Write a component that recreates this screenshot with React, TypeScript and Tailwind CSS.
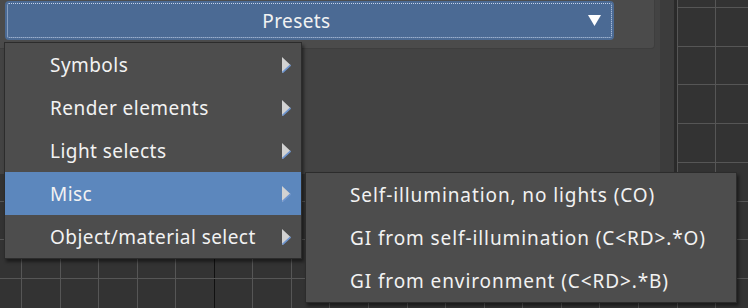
import React from 'react'

const menuItems = ['Symbols', 'Render elements', 'Light selects', 'Misc', 'Object/material select']
const subItems = [
  'Self-illumination, no lights (CO)',
  'GI from self-illumination (C<RD>.*O)',
  'GI from environment (C<RD>.*B)',
]

function ViewportGrid() {
  const xs = Array.from({ length: 20 }, (_, i) => 21 + i * 38.56)
  const ys = Array.from({ length: 9 }, (_, i) => 7 + i * 38.7)
  return (
    <svg className="absolute inset-0" width={748} height={308}>
      {xs.map((x, i) => (
        <line key={'v' + i} x1={Math.round(x) + 0.5} y1={0} x2={Math.round(x) + 0.5} y2={308} stroke={i === 5 ? '#111111' : '#565656'} strokeWidth={1} />
      ))}
      {ys.map((y, i) => (
        <line key={'h' + i} x1={0} y1={Math.round(y) + 0.5} x2={748} y2={Math.round(y) + 0.5} stroke="#565656" strokeWidth={1} />
      ))}
    </svg>
  )
}

function SubArrow() {
  return (
    <svg width={9} height={16} viewBox="0 0 9 16" className="shrink-0">
      <polygon points="0,0 8.5,8 0,16" fill="#d2d2d2" />
      <line x1={0.5} y1={15.5} x2={8.5} y2={8} stroke="#6e95cf" strokeWidth={1.6} />
    </svg>
  )
}

export default function App() {
  return (
    <div
      className="relative w-[748px] h-[308px] overflow-hidden bg-[#333333] text-[#f2f2f2]"
      style={{ fontFamily: '"Noto Sans", "Open Sans", sans-serif' }}
    >
      <ViewportGrid />

      {/* Rollout dialog */}
      <div className="relative flex w-[677px] h-[174px] bg-[#434343]">
        <div className="w-[660px]">
          <div className="w-[655px] h-[49px] bg-[#4b4b4b] rounded-br-[4px] border-b border-r border-[#3e3e3e] pl-[5px] pt-[1px]">
            <div className="relative flex items-center h-[39px] w-[609px] rounded-[4px] bg-[#4b6a94]">
              <div className="absolute inset-[2px] rounded-[2px] border border-dotted border-[#c3d2ea]" />
              <span className="flex-1 text-center text-[19px] tracking-[0.4px] leading-none pt-[2px]">Presets</span>
              <svg width={13} height={11} viewBox="0 0 13 11" className="mr-[13px]">
                <polygon points="0,0 13,0 6.5,11" fill="#ffffff" />
              </svg>
            </div>
          </div>
        </div>
        <div className="w-[14px] bg-[#3c3c3c]" />
        <div className="w-[3px] bg-[#2a2a2a]" />
      </div>

      {/* Presets menu */}
      <div className="absolute left-[4px] top-[42px] w-[298px] border border-[#2c2c2c] bg-[#4d4d4d] shadow-[2px_3px_3px_rgba(0,0,0,0.45)]">
        {menuItems.map((item) => (
          <div
            key={item}
            className={`flex items-center h-[43px] pl-[45px] pr-[10px] text-[19px] tracking-[0.45px] ${item === 'Misc' ? 'bg-[#5c87bd]' : ''}`}
          >
            <span className="flex-1 pt-[2px]">{item}</span>
            <SubArrow />
          </div>
        ))}
      </div>

      {/* Misc submenu */}
      <div className="absolute left-[305px] top-[172px] w-[432px] border border-[#2c2c2c] bg-[#4d4d4d] shadow-[2px_3px_3px_rgba(0,0,0,0.45)]">
        {subItems.map((item) => (
          <div key={item} className="flex items-center h-[43px] pl-[44px] pt-[2px] text-[19px] tracking-[0.9px]">
            {item}
          </div>
        ))}
      </div>
    </div>
  )
}
